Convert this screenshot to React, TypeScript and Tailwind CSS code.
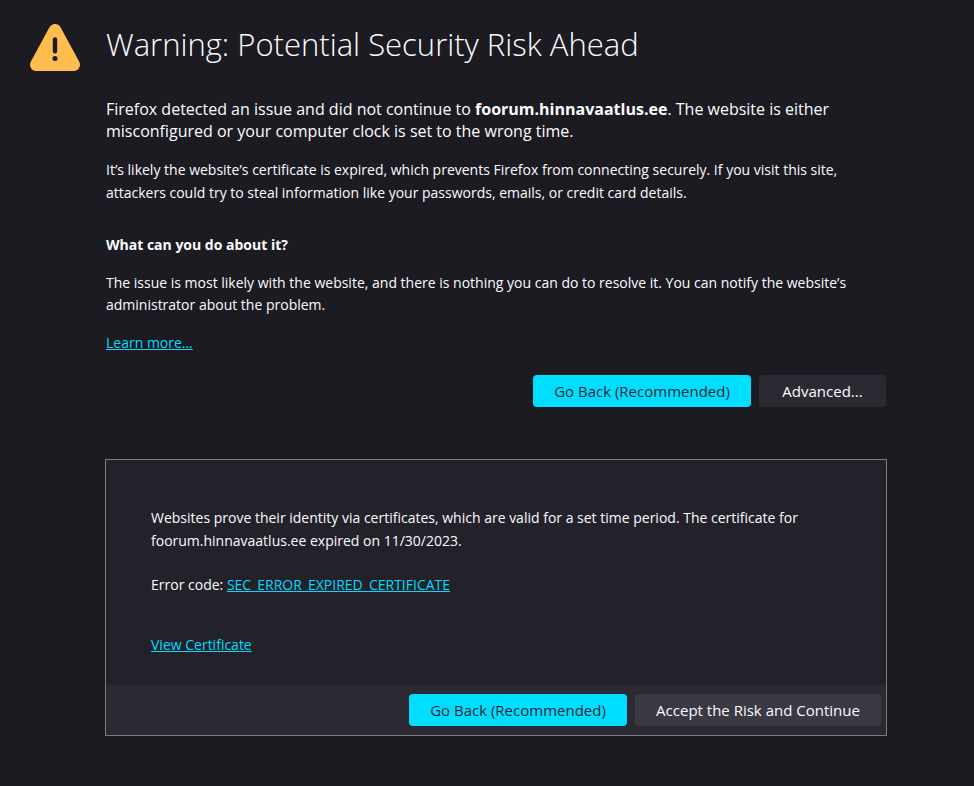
import type { ReactNode } from "react";

function Button({ children, className }: { children: ReactNode; className: string }) {
  return (
    <button type="button" className={`h-8 rounded-sm px-2 text-center text-[15px] ${className}`}>
      {children}
    </button>
  );
}

function WarningIcon() {
  return (
    <svg viewBox="0 0 50 48" className="h-12 w-[50px] shrink-0" aria-hidden="true">
      <path
        d="M25 6.3L43.7 40.7H6.3Z"
        fill="#ffbd4f"
        stroke="#ffbd4f"
        strokeWidth="12.6"
        strokeLinejoin="round"
      />
      <path d="M25 15.5V27.2" stroke="#1c1b22" strokeWidth="4.4" strokeLinecap="round" />
      <circle cx="25" cy="34.6" r="2.5" fill="#1c1b22" />
    </svg>
  );
}

const link = "text-[#00ddff] underline";

export default function App() {
  return (
    <main className="min-h-screen bg-[#1c1b22] pt-6 pr-[88px] pb-[50px] pl-[30px] font-['Open_Sans','Noto_Sans',sans-serif] text-[14px] leading-[22px] text-[#fbfbfe]">
      <div className="flex gap-[26px]">
        <WarningIcon />
        <div className="min-w-0 flex-1">
          <h1 className="text-[31px] leading-10 font-light">Warning: Potential Security Risk Ahead</h1>
          <p className="mt-[34px] text-[16px]">
            Firefox detected an issue and did not continue to <strong>foorum.hinnavaatlus.ee</strong>. The website is either
            <br />
            misconfigured or your computer clock is set to the wrong time.
          </p>
          <p className="mt-4 leading-[23px]">
            It’s likely the website’s certificate is expired, which prevents Firefox from connecting securely. If you visit this site,
            <br />
            attackers could try to steal information like your passwords, emails, or credit card details.
          </p>
          <h2 className="mt-[30px] font-bold">What can you do about it?</h2>
          <p className="mt-4">
            The issue is most likely with the website, and there is nothing you can do to resolve it. You can notify the website’s
            <br />
            administrator about the problem.
          </p>
          <p className="mt-4">
            <a href="#learn" className={link}>Learn more…</a>
          </p>
          <div className="mt-[21px] flex justify-end gap-2">
            <Button className="w-[218px] bg-[#00ddff] text-[#2b2a33]">Go Back (Recommended)</Button>
            <Button className="w-[127px] bg-[#2b2a33]">Advanced...</Button>
          </div>
        </div>
      </div>
      <section className="mt-[52px] -mr-px ml-[75px] border border-[#7c7b82] bg-[#23222b]">
        <div className="px-[45px] pt-[46px] pb-[29px]">
          <p className="leading-[23px]">
            Websites prove their identity via certificates, which are valid for a set time period. The certificate for
            <br />
            foorum.hinnavaatlus.ee expired on 11/30/2023.
          </p>
          <p className="mt-[22px]">
            Error code: <a href="#error" className={link}>SEC_ERROR_EXPIRED_CERTIFICATE</a>
          </p>
          <p className="mt-[38px]">
            <a href="#certificate" className={link}>View Certificate</a>
          </p>
        </div>
        <div className="flex justify-end gap-2 bg-[#2b2a33] px-[5px] py-[9px]">
          <Button className="w-[218px] bg-[#00ddff] text-[#2b2a33]">Go Back (Recommended)</Button>
          <Button className="w-[246px] bg-[#3a3944]">Accept the Risk and Continue</Button>
        </div>
      </section>
    </main>
  );
}
